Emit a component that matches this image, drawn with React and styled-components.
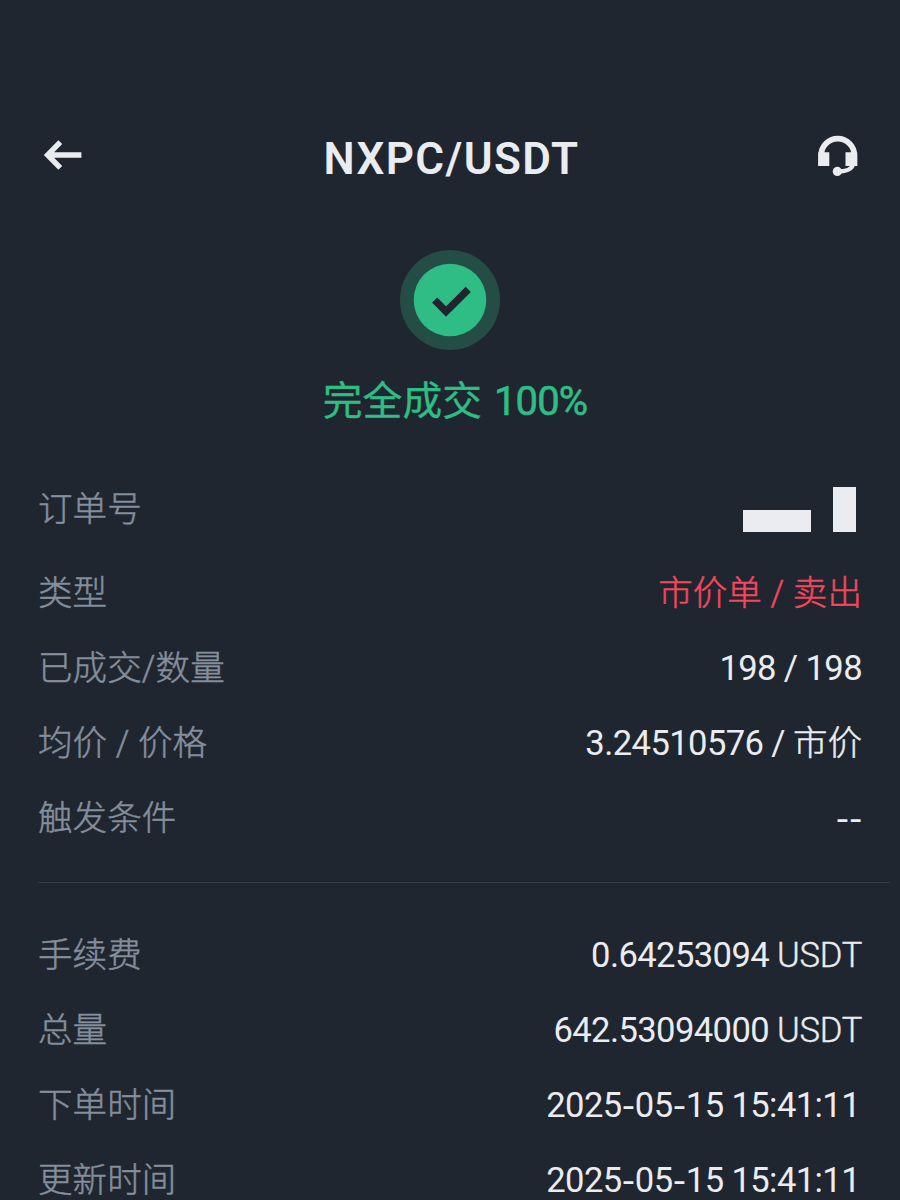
import React from "react";
import styled, { createGlobalStyle } from "styled-components";

const GlobalStyle = createGlobalStyle`
  * {
    box-sizing: border-box;
    margin: 0;
    padding: 0;
  }
  body {
    background: #20262f;
  }
`;

const Page = styled.div`
  width: 900px;
  height: 1200px;
  overflow: hidden;
  padding-top: 120px;
  background: #20262f;
  color: #eaecef;
  font-family: Roboto, "Noto Sans CJK SC", sans-serif;
`;

const Header = styled.header`
  display: flex;
  align-items: center;
  justify-content: space-between;
  height: 78px;
  padding: 0 42px 0 43px;
`;

const Title = styled.h1`
  padding-left: 2px;
  font-size: 44px;
  font-weight: 600;
  line-height: 78px;
  letter-spacing: 1.4px;
`;

const IconButton = styled.button`
  display: flex;
  width: 40px;
  height: 42px;
  margin-bottom: 6px;
  border: none;
  background: none;
  color: #eaecef;
`;

const Status = styled.section`
  display: flex;
  flex-direction: column;
  align-items: center;
  height: 272px;
  padding-top: 52px;
`;

const StatusText = styled.p`
  display: flex;
  align-items: baseline;
  gap: 12px;
  margin-top: 22px;
  padding-left: 10px;
  color: #2ebd85;
  font-size: 39.8px;
  line-height: 60px;
  -webkit-text-stroke: 0.3px currentColor;
`;

const Percent = styled.span`
  font-size: 40px;
  font-weight: 400;
  letter-spacing: -0.9px;
  -webkit-text-stroke: 0.6px currentColor;
`;

const List = styled.dl`
  padding: 0 38px;
`;

const Row = styled.div`
  display: flex;
  align-items: center;
  justify-content: space-between;
  height: ${(props) => (props.$tall ? "85px" : "75px")};
  padding-bottom: ${(props) => (props.$tall ? "8px" : "0")};
`;

const Label = styled.dt`
  color: #848e9c;
  font-size: 34.5px;
  font-weight: 300;
  line-height: 50px;
  letter-spacing: 0.1px;
  -webkit-text-stroke: 0.5px currentColor;
`;

const Value = styled.dd`
  margin-right: ${(props) => (props.$date ? 2 : 0)}px;
  color: #eaecef;
  font-size: 34.6px;
  font-weight: 400;
  line-height: 50px;
  letter-spacing: -0.6px;
  white-space: nowrap;
`;

const SellValue = styled(Value)`
  margin-right: 0;
  color: #f6465d;
  font-size: 34.5px;
  font-weight: 300;
  letter-spacing: 0.1px;
  -webkit-text-stroke: 0.5px currentColor;
`;

const Cjk = styled.span`
  font-size: 34.5px;
  font-weight: 300;
  letter-spacing: 0;
  -webkit-text-stroke: 0.5px currentColor;
`;

const Unit = styled.span`
  font-weight: 300;
  letter-spacing: -0.3px;
  -webkit-text-stroke: 0.4px currentColor;
`;

const Dash = styled.span`
  font-family: Inter, sans-serif;
  font-size: 30px;
  font-weight: 500;
  line-height: 1;
`;

const Redacted = styled.dd`
  display: flex;
  align-items: flex-end;
  gap: 22px;
  height: 45px;
  margin-top: 2px;
  margin-right: 6px;
`;

const Block = styled.span`
  width: ${(props) => props.$w}px;
  height: ${(props) => props.$h}px;
  background: #eaecf1;
`;

const Divider = styled.hr`
  height: 1px;
  margin: 27px 10px 34px 38px;
  border: none;
  background: #363d47;
`;

const BackIcon = () => (
  <svg width="40" height="42" viewBox="0 0 40 42" fill="none">
    <path
      d="M17.3 7.2 4.6 20l12.7 12.8M5 20h33.4"
      stroke="currentColor"
      strokeWidth="5.4"
    />
  </svg>
);

const SupportIcon = () => (
  <svg width="40" height="42" viewBox="0 0 40 42" fill="none">
    <path
      d="M3.2 31V20.2a16.55 16.55 0 0 1 33.1 0V31"
      stroke="currentColor"
      strokeWidth="5.8"
    />
    <path d="M.3 17.3h11V31H.3zM27.5 17.3h11.7V31H27.5z" fill="currentColor" />
    <path
      d="M35.2 29c-1 5-6 7.5-15.7 7.5"
      stroke="currentColor"
      strokeWidth="4"
    />
    <circle cx="19.3" cy="36.4" r="4.6" fill="currentColor" />
  </svg>
);

const SuccessIcon = () => (
  <svg width="100" height="100" viewBox="0 0 100 100" fill="none">
    <circle cx="50" cy="50" r="50" fill="#244d45" />
    <circle cx="50" cy="50" r="36.3" fill="#2ebd85" />
    <path d="M34.7 50 46 61.5 68.3 39.3" stroke="#20262f" strokeWidth="7.4" />
  </svg>
);

const DateTime = () => (
  <Value $date>
    2025<Dash>-</Dash>05<Dash>-</Dash>15 15:41:11
  </Value>
);

export default function App() {
  return (
    <>
      <GlobalStyle />
      <Page>
        <Header>
          <IconButton aria-label="返回">
            <BackIcon />
          </IconButton>
          <Title>NXPC/USDT</Title>
          <IconButton aria-label="客服">
            <SupportIcon />
          </IconButton>
        </Header>
        <Status>
          <SuccessIcon />
          <StatusText>
            完全成交 <Percent>100%</Percent>
          </StatusText>
        </Status>
        <List>
          <Row $tall>
            <Label>订单号</Label>
            <Redacted>
              <Block $w={68} $h={22} />
              <Block $w={23} $h={45} />
            </Redacted>
          </Row>
          <Row>
            <Label>类型</Label>
            <SellValue>市价单 / 卖出</SellValue>
          </Row>
          <Row>
            <Label>已成交/数量</Label>
            <Value>198 / 198</Value>
          </Row>
          <Row>
            <Label>均价 / 价格</Label>
            <Value>
              3.24510576 / <Cjk>市价</Cjk>
            </Value>
          </Row>
          <Row>
            <Label>触发条件</Label>
            <Value>
              <Dash>--</Dash>
            </Value>
          </Row>
        </List>
        <Divider />
        <List>
          <Row>
            <Label>手续费</Label>
            <Value>
              0.64253094 <Unit>USDT</Unit>
            </Value>
          </Row>
          <Row>
            <Label>总量</Label>
            <Value>
              642.53094000 <Unit>USDT</Unit>
            </Value>
          </Row>
          <Row>
            <Label>下单时间</Label>
            <DateTime />
          </Row>
          <Row>
            <Label>更新时间</Label>
            <DateTime />
          </Row>
        </List>
      </Page>
    </>
  );
}
